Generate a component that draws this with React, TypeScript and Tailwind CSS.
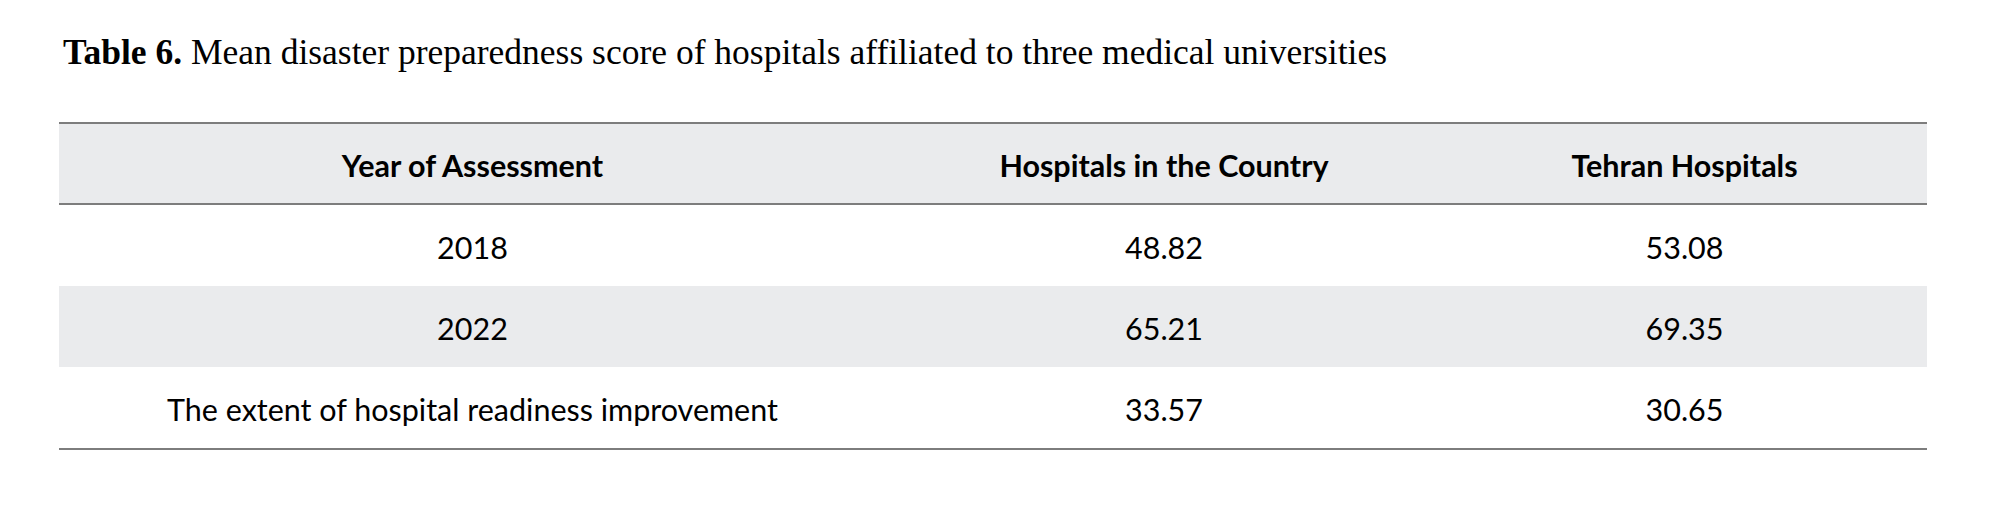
import React from "react";

const rows = [
  ["2018", "48.82", "53.08"],
  ["2022", "65.21", "69.35"],
  ["The extent of hospital readiness improvement", "33.57", "30.65"],
];

const headers = ["Year of Assessment", "Hospitals in the Country", "Tehran Hospitals"];

const App: React.FC = () => {
  return (
    <div className="w-[2000px] h-[518px] bg-white text-black overflow-hidden">
      <div className="pl-[63px] pt-[32px] text-[35.5px] leading-[40px] font-['Liberation_Serif',serif]">
        <span className="font-bold">Table 6.</span> Mean disaster preparedness score of hospitals affiliated to three medical universities
      </div>
      <div className="ml-[59px] mt-[50px] w-[1868px] border-b-2 border-[#7d7d7d] font-['Lato',sans-serif] text-[30.5px]">
        <div className="grid grid-cols-[827px_556px_485px] h-[83px] border-y-2 border-[#7d7d7d] bg-[#eaebed] font-bold">
          {headers.map((h) => (
            <div key={h} className="flex items-center justify-center pt-[4px]">
              {h}
            </div>
          ))}
        </div>
        {rows.map((r, i) => (
          <div
            key={i}
            className={i === 1 ? "grid grid-cols-[827px_556px_485px] h-[81px] bg-[#eaebed]" : "grid grid-cols-[827px_556px_485px] h-[81px]"}
          >
            {r.map((c, j) => (
              <div key={j} className="flex items-center justify-center pt-[4px]">
                {c}
              </div>
            ))}
          </div>
        ))}
      </div>
    </div>
  );
};

export default App;
